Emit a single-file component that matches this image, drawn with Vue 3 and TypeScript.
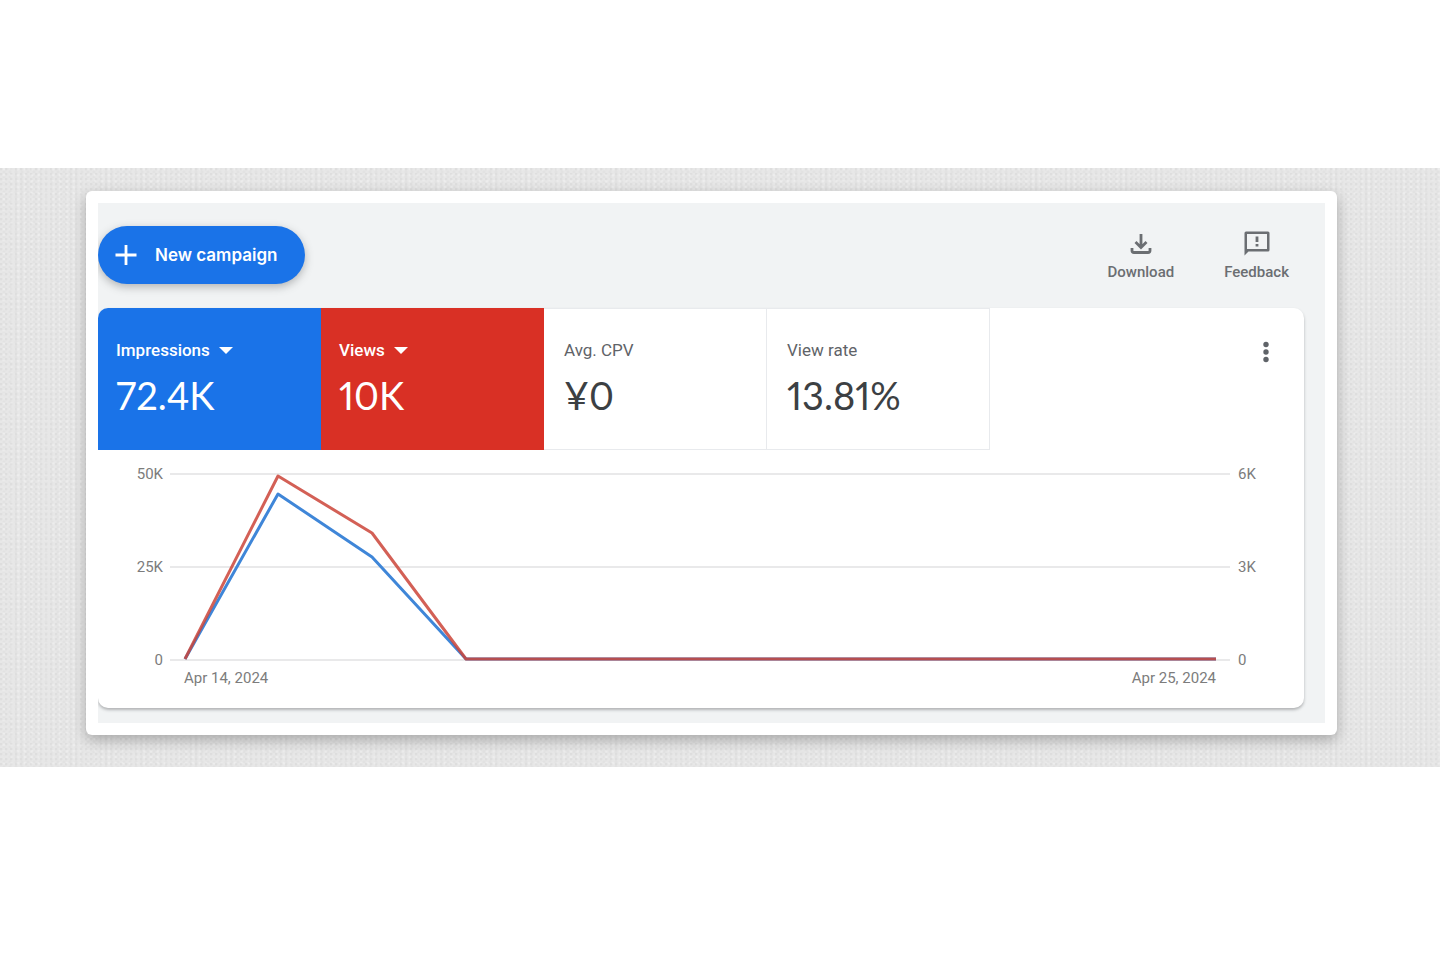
<script setup lang="ts">
interface Metric {
  label: string
  value: string
  tone: string
  menu: boolean
}

const metrics: Metric[] = [
  { label: 'Impressions', value: '72.4K', tone: 'blue', menu: true },
  { label: 'Views', value: '10K', tone: 'red', menu: true },
  { label: 'Avg. CPV', value: '¥0', tone: 'plain', menu: false },
  { label: 'View rate', value: '13.81%', tone: 'plain', menu: false },
]

const leftTicks: string[] = ['50K', '25K', '0']
const rightTicks: string[] = ['6K', '3K', '0']
const gridLines: number[] = [2, 95, 188]

const impressions = '15,187 108,22 202,85 296,187 1046,187'
const views = '15,187 108,4 202,61 296,187 1046,187'
</script>

<template>
  <main class="page">
    <div class="band">
      <div class="frame">
        <div class="screen">
          <header class="toolbar">
            <button type="button" class="new-campaign">
              <svg width="22" height="22" viewBox="0 0 22 22" aria-hidden="true">
                <path d="M11 1v20M0.500 11h21" stroke="currentColor" stroke-width="2.800" fill="none" />
              </svg>
              New campaign
            </button>
            <div class="actions">
              <button type="button" class="action">
                <svg width="28" height="28" viewBox="0 0 28 28" fill="none" stroke="currentColor" stroke-width="2.800" aria-hidden="true">
                  <path d="M14 4v13M8.500 12l5.500 5.500 5.500-5.500M5 18v2.500q0 2 2 2h14q2 0 2-2V18" />
                </svg>
                Download
              </button>
              <button type="button" class="action">
                <svg width="28" height="28" viewBox="0 0 28 28" aria-hidden="true">
                  <path d="M1.500 25.500V3Q1.500 1.500 3 1.500h22Q26.500 1.500 26.500 3v17q0 1.500-1.500 1.500H5.500z" fill="currentColor" />
                  <path d="M4 4h20v15H4z" fill="#f1f3f4" />
                  <path d="M14 6.500v5.500M14 14v2.600" stroke="currentColor" stroke-width="2.800" />
                </svg>
                Feedback
              </button>
            </div>
          </header>

          <section class="card">
            <div class="summary">
              <component
                :is="m.menu ? 'button' : 'div'"
                v-for="m in metrics"
                :key="m.label"
                :type="m.menu ? 'button' : undefined"
                class="metric"
                :class="m.tone"
              >
                <span class="label">
                  {{ m.label }}
                  <svg v-if="m.menu" width="14" height="7" viewBox="0 0 14 7" aria-hidden="true">
                    <path d="M0 0h14L7 7z" fill="currentColor" />
                  </svg>
                </span>
                <span class="value">{{ m.value }}</span>
              </component>
              <button type="button" class="more" aria-label="More options">
                <svg width="8" height="22" viewBox="0 0 8 22" fill="currentColor" aria-hidden="true">
                  <circle cx="4" cy="3.500" r="2.700" />
                  <circle cx="4" cy="11" r="2.700" />
                  <circle cx="4" cy="18.500" r="2.700" />
                </svg>
              </button>
            </div>

            <div class="chart">
              <div class="axis left">
                <span v-for="t in leftTicks" :key="t">{{ t }}</span>
              </div>
              <div class="plot">
                <svg class="lines" viewBox="0 0 1060 190" preserveAspectRatio="none" role="img" aria-label="Impressions and views by day">
                  <g stroke="#e9e9ea" stroke-width="2">
                    <path v-for="y in gridLines" :key="y" :d="`M0 ${y}H1060`" vector-effect="non-scaling-stroke" />
                  </g>
                  <g fill="none" stroke-width="3" stroke-linejoin="round">
                    <polyline :points="impressions" stroke="#3f86d8" vector-effect="non-scaling-stroke" />
                    <polyline :points="views" stroke="#cb4438" stroke-opacity="0.85" vector-effect="non-scaling-stroke" />
                  </g>
                </svg>
                <div class="dates">
                  <span>Apr 14, 2024</span>
                  <span>Apr 25, 2024</span>
                </div>
              </div>
              <div class="axis right">
                <span v-for="t in rightTicks" :key="t">{{ t }}</span>
              </div>
            </div>
          </section>
        </div>
      </div>
    </div>
  </main>
</template>

<style>
body {
  margin: 0;
  background: #fff;
}
</style>

<style scoped>
.page {
  box-sizing: border-box;
  min-height: 100vh;
  padding: 168px 0;
  font-family: Roboto, 'Liberation Sans', sans-serif;
  color: #5f6368;
}
.band {
  padding: 23px 103px 32px 86px;
  background-color: #e7e7e7;
  background-image:
    radial-gradient(circle at 1px 1px, rgba(0, 0, 0, 0.06) 0, transparent 2px),
    radial-gradient(circle at 4px 4px, rgba(0, 0, 0, 0.04) 0, transparent 2px),
    radial-gradient(circle at 4px 1px, rgba(255, 255, 255, 0.4) 0, transparent 2px);
  background-size: 5px 5px, 6px 5px, 7px 6px;
}
.frame {
  padding: 12px;
  background: #fff;
  border-radius: 6px;
  box-shadow: 0 5px 14px rgba(0, 0, 0, 0.27);
}
.screen {
  overflow: hidden;
  padding: 23px 21px 15px 0;
  background: #f1f3f4;
}
button {
  border: 0;
  padding: 0;
  background: none;
  font: inherit;
  color: inherit;
  text-align: left;
  cursor: pointer;
}
.toolbar {
  display: flex;
  justify-content: space-between;
  align-items: center;
  margin-bottom: 24px;
}
.new-campaign {
  display: flex;
  align-items: center;
  gap: 18px;
  height: 58px;
  padding: 0 28px 0 17px;
  border-radius: 29px;
  background: #1a73e8;
  color: #fff;
  font-family: Inter, Roboto, sans-serif;
  font-size: 17px;
  font-weight: 600;
  box-shadow: 0 3px 8px rgba(60, 64, 67, 0.35);
}
.actions {
  display: flex;
  gap: 50px;
  padding: 3px 15px 0 0;
}
.action {
  display: flex;
  flex-direction: column;
  align-items: center;
  gap: 2px;
  font-size: 15px;
  line-height: 24px;
  font-weight: 500;
  color: #6b6e72;
}
.card {
  background: #fff;
  border-radius: 10px;
  box-shadow: 0 2px 3px rgba(60, 64, 67, 0.35);
  overflow: hidden;
}
.summary {
  display: flex;
}
.metric {
  box-sizing: border-box;
  display: flex;
  flex-direction: column;
  flex: 0 1 223px;
  height: 142px;
  padding: 30px 0 0 18px;
}
.metric.plain {
  border: 1px solid #e8eaed;
  border-left: 0;
  padding: 29px 0 0 20px;
}
.blue {
  background: #1a73e8;
  color: #fff;
}
.red {
  background: #d93025;
  color: #fff;
}
.label {
  display: flex;
  align-items: center;
  gap: 9px;
  font-size: 17px;
  line-height: 24px;
}
.blue .label,
.red .label {
  font-weight: 500;
}
.value {
  font-family: Lato, Roboto, sans-serif;
  font-variant-numeric: proportional-nums;
  font-size: 38px;
  line-height: 48px;
  margin-top: 9px;
}
.plain .value {
  color: #3c4043;
}
.more {
  align-self: flex-start;
  display: flex;
  margin: 33px 34px 0 auto;
}
.chart {
  display: flex;
  padding: 22px 0;
  font-size: 15px;
  line-height: 16px;
  color: #7c7c7c;
}
.axis {
  display: flex;
  flex-direction: column;
  justify-content: space-between;
  height: 202px;
  margin-top: -6px;
}
.left {
  width: 65px;
  margin-right: 7px;
  text-align: right;
}
.right {
  width: 66px;
  margin-left: 8px;
}
.plot {
  flex: 1;
  min-width: 0;
}
.lines {
  display: block;
  width: 100%;
  height: 190px;
}
.dates {
  display: flex;
  justify-content: space-between;
  padding: 8px 14px 0;
}
</style>
